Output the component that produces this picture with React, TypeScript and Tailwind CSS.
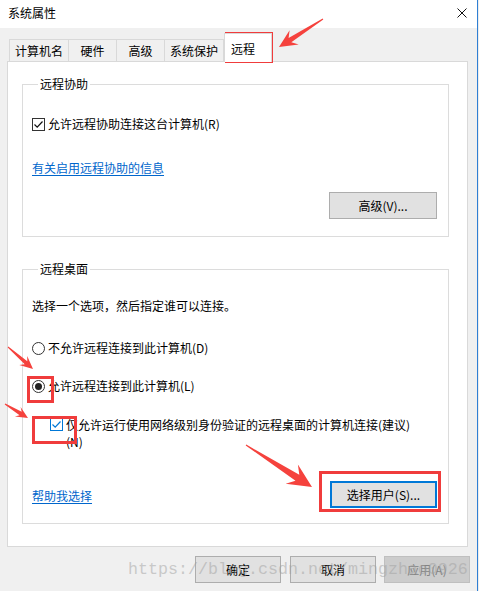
import React from "react";

type P = [number, number];

function arrowPoints(tail: P, tip: P, headLen: number, headW: number, tailW: number, shaftW: number) {
  const dx = tip[0] - tail[0];
  const dy = tip[1] - tail[1];
  const len = Math.hypot(dx, dy);
  const ux = dx / len;
  const uy = dy / len;
  const nx = -uy;
  const ny = ux;
  const j: P = [tip[0] - ux * headLen * 0.72, tip[1] - uy * headLen * 0.72];
  const b: P = [tip[0] - ux * headLen, tip[1] - uy * headLen];
  const pts: P[] = [
    [tail[0] + (nx * tailW) / 2, tail[1] + (ny * tailW) / 2],
    [j[0] + (nx * shaftW) / 2, j[1] + (ny * shaftW) / 2],
    [b[0] + (nx * headW) / 2, b[1] + (ny * headW) / 2],
    tip,
    [b[0] - (nx * headW) / 2, b[1] - (ny * headW) / 2],
    [j[0] - (nx * shaftW) / 2, j[1] - (ny * shaftW) / 2],
    [tail[0] - (nx * tailW) / 2, tail[1] - (ny * tailW) / 2],
  ];
  return pts.map((p) => `${p[0].toFixed(1)},${p[1].toFixed(1)}`).join(" ");
}

function CheckMark({ color }: { color: string }) {
  return (
    <svg width="11" height="11" viewBox="0 0 11 11">
      <path d="M1.5 5.5 L4.2 8.2 L9.5 2.5" fill="none" stroke={color} strokeWidth="1.2" />
    </svg>
  );
}

function Tab({ label, w, right }: { label: string; w: string; right?: boolean }) {
  return (
    <div
      className={`flex h-[22px] items-center justify-center border-l border-t border-[#d9d9d9] bg-[#f0f0f0] ${w} ${
        right ? "border-r" : ""
      }`}
    >
      {label}
    </div>
  );
}

export default function App() {
  return (
    <div className="relative h-[591px] w-[479px] overflow-hidden bg-white font-['Noto_Sans_CJK_SC',sans-serif] text-[12px] leading-[16px] text-black">
      <div className="flex h-full">
        <div className="flex w-[477px] flex-col bg-[#f0f0f0]">
          {/* title bar */}
          <div className="flex h-[28px] items-start justify-between bg-white pl-[8px] pr-[10px]">
            <div className="pt-[5px]">系统属性</div>
            <svg className="mt-[8px]" width="10" height="10" viewBox="0 0 10 10">
              <path d="M0.5 0.5 L9.5 9.5 M9.5 0.5 L0.5 9.5" stroke="#111" strokeWidth="1" />
            </svg>
          </div>

          {/* tabs */}
          <div className="mt-[5px] flex h-[28px] items-end pl-[9px]">
            <Tab label="计算机名" w="w-[59px]" />
            <Tab label="硬件" w="w-[48px]" />
            <Tab label="高级" w="w-[48px]" />
            <Tab label="系统保护" w="w-[60px]" right />
            <div className="relative z-10 -mb-px flex h-[29px] w-[48px] items-start border-l border-r border-t border-[#d9d9d9] bg-white pl-[6px] pt-[7px]">
              远程
            </div>
          </div>

          {/* panel */}
          <div className="ml-[7px] flex h-[486px] w-[461px] flex-col border border-[#d9d9d9] bg-white">
            {/* group 1 */}
            <fieldset className="ml-[14px] mt-[14px] w-[427px] border border-[#dcdcdc] pl-[9px] pr-[11px] pb-[17px]">
              <legend className="ml-[6px] px-[2px] leading-[16px]">远程协助</legend>
              <div className="mt-[24px] flex h-[16px] items-center">
                <div className="flex h-[13px] w-[13px] items-center justify-center border border-[#333333] bg-white">
                  <CheckMark color="#111" />
                </div>
                <span className="ml-[3px]">允许远程协助连接这台计算机(R)</span>
              </div>
              <div className="mt-[28px] h-[16px]">
                <span className="text-[#0066cc] underline underline-offset-[2px]">有关启用远程协助的信息</span>
              </div>
              <div className="mt-[16px] flex justify-end">
                <div className="flex h-[27px] w-[108px] items-center justify-center border border-[#adadad] bg-[#e1e1e1]">
                  高级(V)...
                </div>
              </div>
            </fieldset>

            {/* group 2 */}
            <fieldset className="ml-[14px] mt-[24px] w-[427px] border border-[#dcdcdc] pl-[9px] pr-[11px] pb-[15px]">
              <legend className="ml-[6px] px-[2px] leading-[16px]">远程桌面</legend>
              <div className="mt-[21px] h-[16px]">选择一个选项，然后指定谁可以连接。</div>
              <div className="mt-[26px] flex h-[16px] items-center">
                <div className="h-[13px] w-[13px] rounded-full border border-[#333333] bg-white" />
                <span className="ml-[3px]">不允许远程连接到此计算机(D)</span>
              </div>
              <div className="mt-[22px] flex h-[16px] items-center">
                <div className="flex h-[13px] w-[13px] items-center justify-center rounded-full border border-[#333333] bg-white">
                  <div className="h-[7px] w-[7px] rounded-full bg-[#222222]" />
                </div>
                <span className="ml-[3px]">允许远程连接到此计算机(L)</span>
              </div>
              <div className="mt-[22px] flex items-start">
                <div className="ml-[18px] mt-[2px] flex h-[13px] w-[13px] shrink-0 items-center justify-center border border-[#0078d7] bg-white">
                  <CheckMark color="#0078d7" />
                </div>
                <span className="ml-[3px] leading-[17px]">
                  仅允许运行使用网络级别身份验证的远程桌面的计算机连接(建议)
                  <br />
                  (N)
                </span>
              </div>
              <div className="mt-[31px] flex h-[27px] items-center justify-between">
                <span className="mt-[3px] text-[#0066cc] underline underline-offset-[2px]">帮助我选择</span>
                <div className="flex h-[27px] w-[107px] items-center justify-center border-2 border-[#0078d7] bg-[#e1e1e1]">
                  选择用户(S)...
                </div>
              </div>
            </fieldset>
          </div>

          {/* bottom buttons */}
          <div className="mt-[9px] flex justify-end pr-[7px]">
            <div className="flex h-[27px] w-[86px] items-center justify-center border border-[#adadad] bg-[#e1e1e1]">
              确定
            </div>
            <div className="ml-[9px] flex h-[27px] w-[86px] items-center justify-center border border-[#adadad] bg-[#e1e1e1]">
              取消
            </div>
            <div className="ml-[8px] flex h-[27px] w-[86px] items-center justify-center border border-[#bfbfbf] bg-[#cccccc] text-[#838383]">
              应用(A)
            </div>
          </div>
        </div>
        <div className="w-px bg-[#2f7fd4]" />
        <div className="w-px bg-[#ececec]" />
      </div>

      {/* watermark */}
      <div className="pointer-events-none absolute left-[128px] top-[560px] whitespace-nowrap font-['Liberation_Mono',monospace] text-[16.67px] leading-[20px] text-[rgba(160,160,160,0.5)]">
        https://blog.csdn.net/mingzhao0926
      </div>

      {/* annotations */}
      <svg className="pointer-events-none absolute left-0 top-0" width="479" height="591" viewBox="0 0 479 591">
        <g fill="none" stroke="#f03c3c" strokeWidth="3">
          <rect x="226.5" y="33.5" width="45" height="28" />
          <rect x="28.5" y="377.5" width="24" height="24" />
          <rect x="33.5" y="417.5" width="42" height="25" />
          <rect x="320.5" y="472.5" width="119" height="38" />
        </g>
        <g fill="#f5423d">
          <polygon points={arrowPoints([323, 19], [279, 47], 18, 17, 1, 5)} />
          <polygon points={arrowPoints([8, 347], [33, 369], 13, 12, 1, 4)} />
          <polygon points={arrowPoints([5, 404], [28, 418], 12, 11, 1, 4)} />
          <polygon points={arrowPoints([246, 445], [312, 487], 24, 23, 1, 7)} />
        </g>
      </svg>
    </div>
  );
}
